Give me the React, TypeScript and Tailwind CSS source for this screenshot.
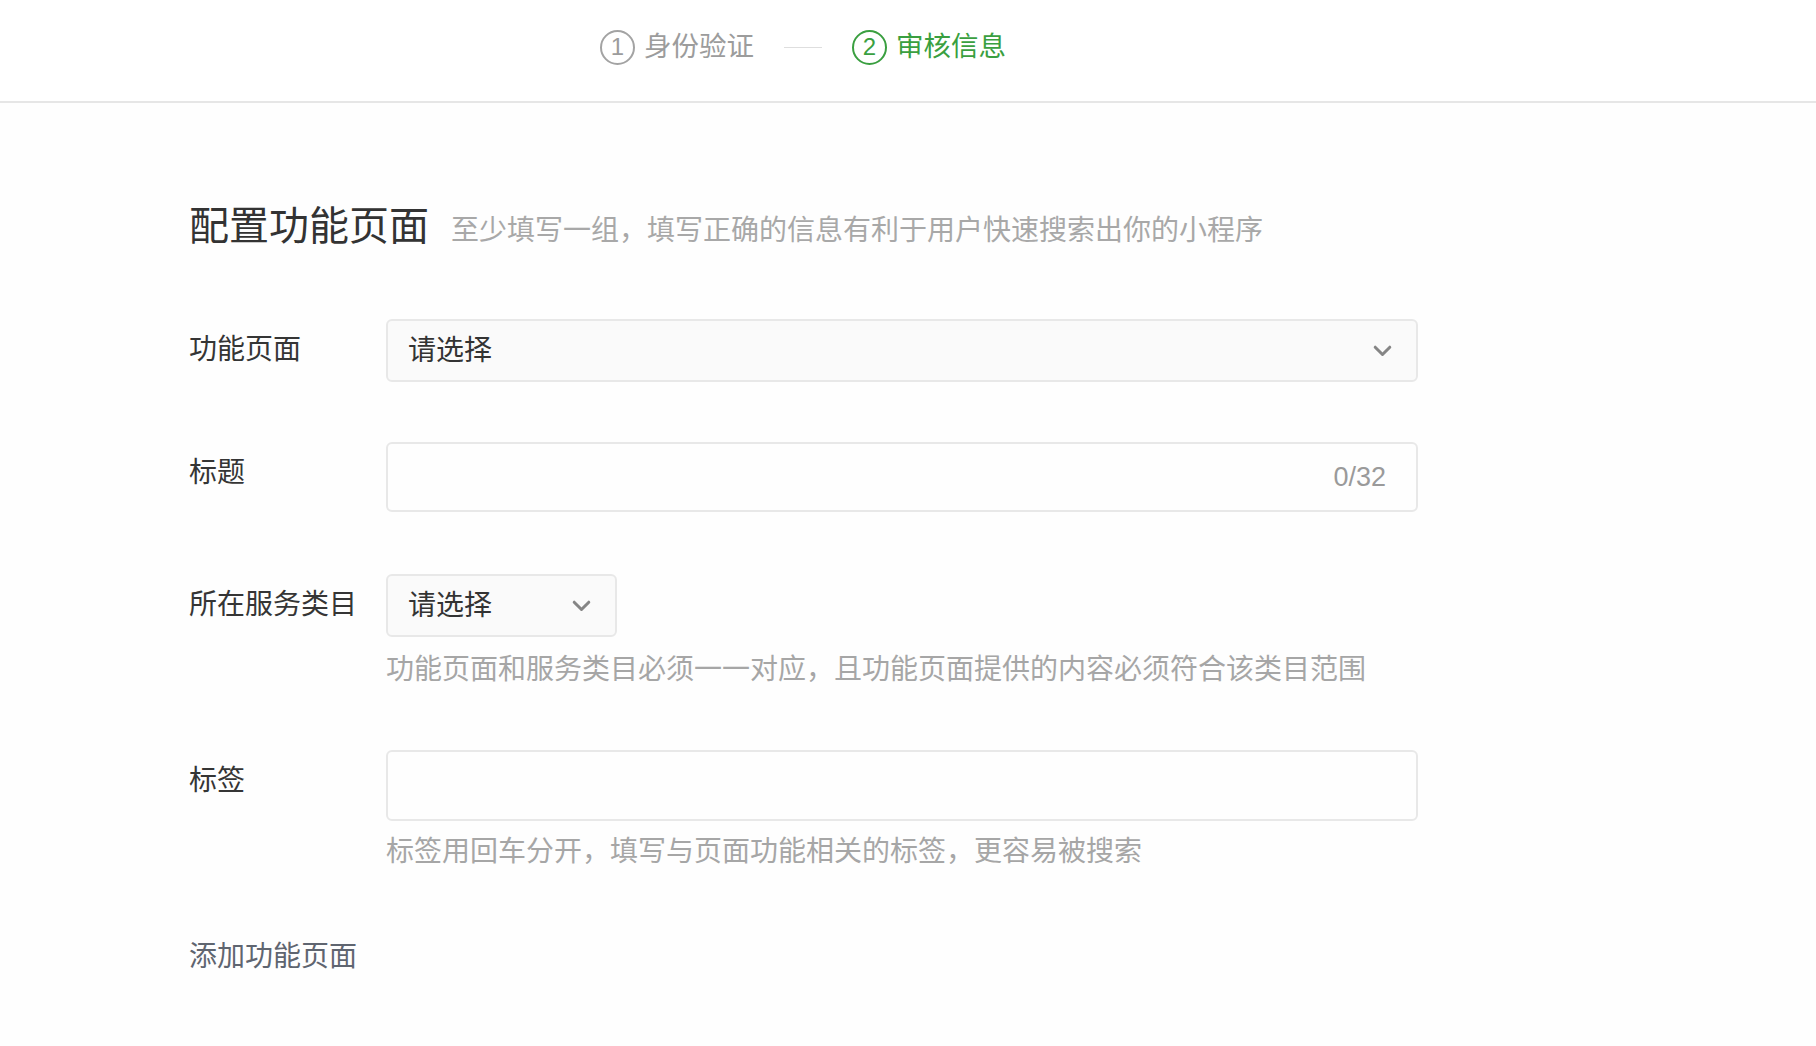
const font = "font-['Liberation_Sans','Noto_Sans_CJK_SC',sans-serif]";

function Chevron() {
  return (
    <svg width="19" height="12" viewBox="0 0 19 12" fill="none" className="shrink-0">
      <path d="M2.2 2.2l7.3 7.3 7.3-7.3" stroke="#858585" strokeWidth="3" strokeLinecap="round" strokeLinejoin="round" />
    </svg>
  );
}

function Step({ n, label, active }: { n: number; label: string; active?: boolean }) {
  const color = active ? "text-[#3a9f40] border-[#3a9f40]" : "text-[#9c9c9c] border-[#a3a3a3]";
  return (
    <div className={`flex items-center gap-[9px] ${active ? "text-[#3a9f40]" : "text-[#9c9c9c]"}`}>
      <span className={`flex h-[35px] w-[35px] items-center justify-center rounded-full border-2 text-[24px] leading-none ${color}`}>
        {n}
      </span>
      <span className="text-[27.5px] leading-none">{label}</span>
    </div>
  );
}

function Row({ label, children, hint, hintGap = "mt-[13px]" }: { label: string; children: React.ReactNode; hint?: string; hintGap?: string }) {
  return (
    <div className="flex">
      <div className="w-[197px] shrink-0 pt-[15px] text-[28px] leading-[32px] text-[#353535]">{label}</div>
      <div className="flex flex-col">
        {children}
        {hint && <p className={`${hintGap} text-[28px] leading-[36px] text-[#a6a6a6]`}>{hint}</p>}
      </div>
    </div>
  );
}

export default function App() {
  return (
    <div className={`min-h-screen bg-[#fefefe] ${font}`}>
      <header className="flex h-[103px] items-center border-b-2 border-[#e6e6e6] bg-white pl-[600px] pb-[7px]">
        <Step n={1} label="身份验证" />
        <div className="mx-[30px] h-px w-[38px] bg-[#dedede]" />
        <Step n={2} label="审核信息" active />
      </header>

      <main className="pl-[189px] pt-[99px]">
        <div className="flex items-baseline gap-[22px]">
          <h1 className="text-[40px] leading-[48px] font-normal text-[#333]">配置功能页面</h1>
          <span className="text-[28px] text-[#a8a8a8]">至少填写一组，填写正确的信息有利于用户快速搜索出你的小程序</span>
        </div>

        <div className="mt-[67px] flex flex-col">
          <Row label="功能页面">
            <div className="flex h-[63px] w-[1032px] items-center justify-between rounded-[6px] border-2 border-[#e8e8e8] bg-[#fafafa] pl-[20px] pr-[24px]">
              <span className="text-[28px] text-[#333]">请选择</span>
              <Chevron />
            </div>
          </Row>

          <div className="h-[60px]" />
          <Row label="标题">
            <div className="flex h-[70px] w-[1032px] items-center justify-end rounded-[6px] border-2 border-[#e8e8e8] bg-[#fefefe] pr-[30px]">
              <span className="text-[27px] text-[#9a9a9a]">0/32</span>
            </div>
          </Row>

          <div className="h-[62px]" />
          <Row label="所在服务类目" hint="功能页面和服务类目必须一一对应，且功能页面提供的内容必须符合该类目范围" hintGap="mt-[15px]">
            <div className="flex h-[63px] w-[231px] items-center justify-between rounded-[6px] border-2 border-[#e8e8e8] bg-[#fafafa] pl-[20px] pr-[24px]">
              <span className="text-[28px] text-[#333]">请选择</span>
              <Chevron />
            </div>
          </Row>

          <div className="h-[62px]" />
          <Row label="标签" hint="标签用回车分开，填写与页面功能相关的标签，更容易被搜索">
            <div className="h-[71px] w-[1032px] rounded-[6px] border-2 border-[#e8e8e8] bg-[#fefefe]" />
          </Row>

          <button className="mt-[69px] self-start text-left text-[28px] leading-[36px] text-[#5f6570]">添加功能页面</button>
        </div>
      </main>
    </div>
  );
}
